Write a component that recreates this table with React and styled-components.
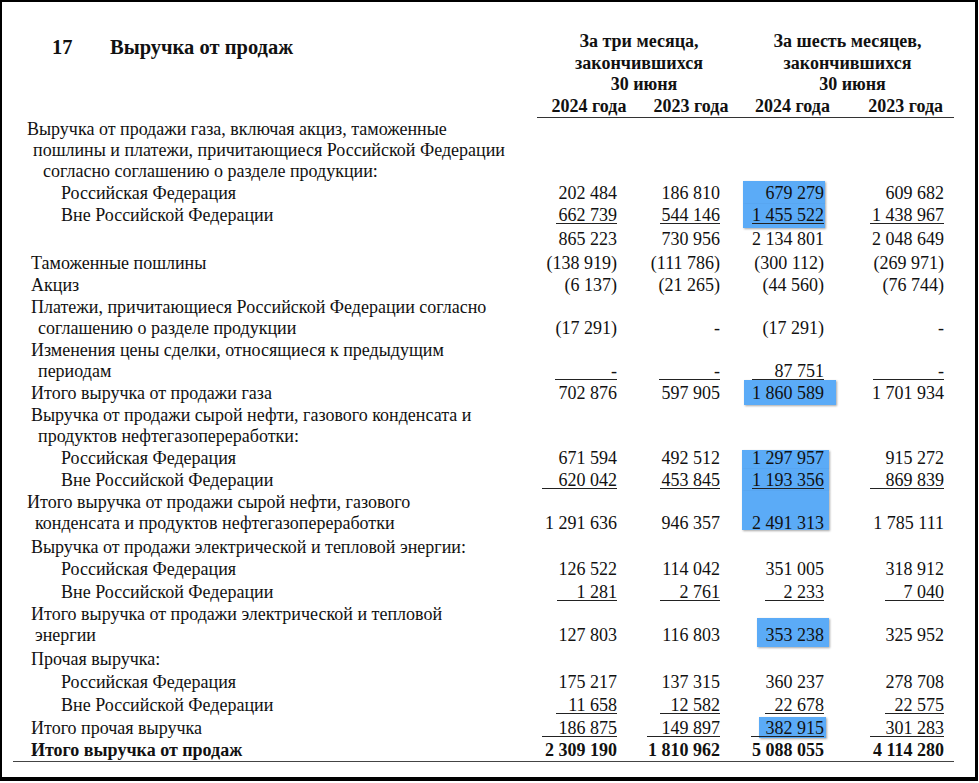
import React from "react";
import styled, { createGlobalStyle } from "styled-components";

const GlobalStyle = createGlobalStyle`
  html, body {
    margin: 0;
    padding: 0;
    background: #fff;
  }
  body {
    font-family: "Liberation Serif", "Times New Roman", serif;
    color: #111;
  }
`;

const Frame = styled.div`
  position: relative;
  z-index: 0;
  box-sizing: border-box;
  width: 978px;
  height: 781px;
  border-style: solid;
  border-color: #000;
  border-width: 2px 3px 4px 2px;
  padding: 29px 21px 0 11px;
  background: #fff;
  overflow: hidden;
`;

const Header = styled.div`
  display: flex;
  align-items: flex-start;
`;

const Title = styled.h2`
  margin: 6px 0 0 39px;
  display: flex;
  font-size: 20.5px;
  line-height: 21.5px;
  font-weight: bold;
`;

const TitleNum = styled.span`
  width: 58px;
`;

const ColHeads = styled.div`
  margin-left: auto;
  width: 417px;
  font-size: 18px;
  line-height: 21.5px;
  font-weight: bold;
`;

const Groups = styled.div`
  display: grid;
  grid-template-columns: 204px 213px;
`;

const Group = styled.div`
  text-align: center;
`;

const GroupLine = styled.div`
  padding-left: ${(p) => p.$shift || 0}px;
`;

const Years = styled.div`
  display: grid;
  grid-template-columns: 104px 100px 103px 110px;
  border-bottom: 1px solid #333;
`;

const Year = styled.div`
  text-align: ${(p) => (p.$right ? "right" : "center")};
  padding-right: ${(p) => (p.$right ? 11 : 0)}px;
`;

const Table = styled.div`
  border-bottom: 1.5px solid #444;
  font-size: 18px;
  line-height: 21px;
`;

const Row = styled.div`
  display: grid;
  grid-template-columns: 527px 77px 103px 104px 120px 11px;
  font-weight: ${(p) => (p.$bold ? "bold" : "normal")};
`;

const Label = styled.div`
  padding-top: ${(p) => p.$pad}px;
  white-space: nowrap;
`;

const LabelLine = styled.div`
  padding-left: ${(p) => p.$x - 13}px;
`;

const Value = styled.div`
  position: relative;
  padding-top: ${(p) => p.$pad}px;
  display: flex;
  flex-direction: column;
  justify-content: flex-end;
  text-align: right;
  white-space: nowrap;

  ${(p) =>
    p.$hl &&
    `
    &::before {
      content: "";
      position: absolute;
      z-index: -1;
      top: ${p.$hl.t}px;
      bottom: ${p.$hl.b}px;
      left: ${p.$hl.l}px;
      right: ${p.$hl.r}px;
      background: #5babf7;
      box-shadow: 1px 1px 2px rgba(0, 0, 0, 0.35);
    }
  `}
`;

const Under = styled.span`
  display: inline-block;
  min-width: ${(p) => p.$w}px;
  line-height: 16px;
  border-bottom: 1px solid #222;
`;

const rows = [
  {
    lines: [
      ["Выручка от продажи газа, включая акциз, таможенные", 27],
      ["пошлины и платежи, причитающиеся Российской Федерации", 33],
      ["согласно соглашению о разделе продукции:", 43],
    ],
  },
  {
    lines: [["Российская Федерация", 61]],
    vals: ["202 484", "186 810", "679 279", "609 682"],
    hl: { t: -1.5, b: 0, l: 23, r: -1 },
  },
  {
    lines: [["Вне Российской Федерации", 61]],
    vals: ["662 739", "544 146", "1 455 522", "1 438 967"],
    u: [61, 60, 72, 74],
    hl: { t: 0, b: -1.5, l: 23, r: -1 },
  },
  { lines: [], vals: ["865 223", "730 956", "2 134 801", "2 048 649"], pad: 3 },
  {
    lines: [["Таможенные пошлины", 31]],
    vals: ["(138 919)", "(111 786)", "(300 112)", "(269 971)"],
    pad: 3,
  },
  { lines: [["Акциз", 31]], vals: ["(6 137)", "(21 265)", "(44 560)", "(76 744)"] },
  {
    lines: [
      ["Платежи, причитающиеся Российской Федерации согласно", 31],
      ["соглашению о разделе продукции", 38],
    ],
    vals: ["(17 291)", "-", "(17 291)", "-"],
  },
  {
    lines: [
      ["Изменения цены сделки, относящиеся к предыдущим", 31],
      ["периодам", 38],
    ],
    vals: ["-", "-", "87 751", "-"],
    u: [62, 61, 72, 71],
  },
  {
    lines: [["Итого выручка от продажи газа", 31]],
    vals: ["702 876", "597 905", "1 860 589", "1 701 934"],
    hl: { t: -2.5, b: -0.5, l: 24, r: -12 },
  },
  {
    lines: [
      ["Выручка от продажи сырой нефти, газового конденсата и", 31],
      ["продуктов нефтегазопереработки:", 38],
    ],
  },
  {
    lines: [["Российская Федерация", 61]],
    vals: ["671 594", "492 512", "1 297 957", "915 272"],
    hl: { t: 2.5, b: 0, l: 22, r: -5 },
  },
  {
    lines: [["Вне Российской Федерации", 61]],
    vals: ["620 042", "453 845", "1 193 356", "869 839"],
    u: [75, 60, 72, 74],
    hl: { t: 0, b: 0, l: 22, r: -5 },
  },
  {
    lines: [
      ["Итого выручка от продажи сырой нефти, газового", 27],
      ["конденсата и продуктов нефтегазопереработки", 35],
    ],
    vals: ["1 291 636", "946 357", "2 491 313", "1 785 111"],
    hl: { t: 0, b: 4.5, l: 22, r: -5 },
  },
  { lines: [["Выручка от продажи электрической и тепловой энергии:", 31]], pad: 3 },
  {
    lines: [["Российская Федерация", 61]],
    vals: ["126 522", "114 042", "351 005", "318 912"],
  },
  {
    lines: [["Вне Российской Федерации", 61]],
    vals: ["1 281", "2 761", "2 233", "7 040"],
    u: [60, 60, 59, 59],
    pad: 2,
  },
  {
    lines: [
      ["Итого выручка от продажи электрической и тепловой", 31],
      ["энергии", 35],
    ],
    vals: ["127 803", "116 803", "353 238", "325 952"],
    hl: { t: 14.5, b: -0.5, l: 37, r: -5 },
  },
  { lines: [["Прочая выручка:", 31]], pad: 3 },
  {
    lines: [["Российская Федерация", 61]],
    vals: ["175 217", "137 315", "360 237", "278 708"],
    pad: 2,
  },
  {
    lines: [["Вне Российской Федерации", 61]],
    vals: ["11 658", "12 582", "22 678", "22 575"],
    u: [61, 60, 59, 59],
    pad: 2,
  },
  {
    lines: [["Итого прочая выручка", 31]],
    vals: ["186 875", "149 897", "382 915", "301 283"],
    u: [75, 73, 73, 74],
    pad: 2,
    hl: { t: 0.5, b: 1.5, l: 39, r: -2 },
  },
  {
    lines: [["Итого выручка от продаж", 31]],
    vals: ["2 309 190", "1 810 962", "5 088 055", "4 114 280"],
    bold: true,
  },
];

const TableRow = ({ row }) => {
  const pad = row.pad ?? 1;
  const vals = row.vals || ["", "", "", ""];
  return (
    <Row $bold={row.bold}>
      <Label $pad={pad}>
        {row.lines.map(([t, x], i) => (
          <LabelLine key={i} $x={x}>
            {t}
          </LabelLine>
        ))}
      </Label>
      {vals.map((v, i) => (
        <Value key={i} $pad={pad} $hl={i === 2 ? row.hl : null}>
          <div>{row.u ? <Under $w={row.u[i]}>{v}</Under> : v}</div>
        </Value>
      ))}
      <div />
    </Row>
  );
};

export default function App() {
  return (
    <>
      <GlobalStyle />
      <Frame>
        <Header>
          <Title>
            <TitleNum>17</TitleNum>
            <span>Выручка от продаж</span>
          </Title>
          <ColHeads>
            <Groups>
              <Group>
                <GroupLine>За три месяца,</GroupLine>
                <GroupLine>закончившихся</GroupLine>
                <GroupLine $shift={10}>30 июня</GroupLine>
              </Group>
              <Group>
                <GroupLine>За шесть месяцев,</GroupLine>
                <GroupLine>закончившихся</GroupLine>
                <GroupLine $shift={10}>30 июня</GroupLine>
              </Group>
            </Groups>
            <Years>
              <Year>2024 года</Year>
              <Year>2023 года</Year>
              <Year>2024 года</Year>
              <Year $right>2023 года</Year>
            </Years>
          </ColHeads>
        </Header>
        <Table>
          {rows.map((row, i) => (
            <TableRow key={i} row={row} />
          ))}
        </Table>
      </Frame>
    </>
  );
}
